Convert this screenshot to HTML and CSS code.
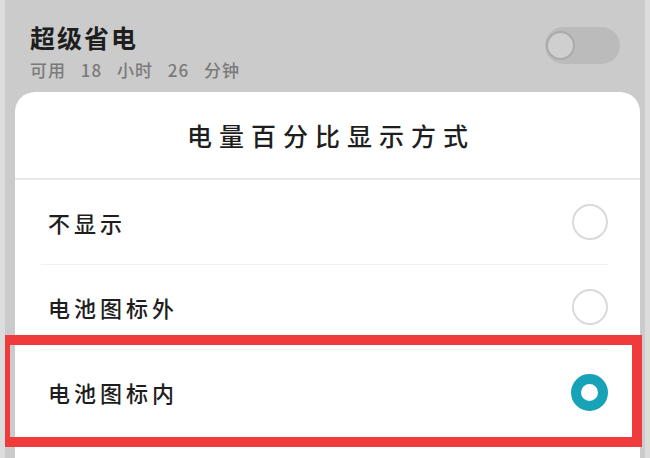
FILE: index.html
```html
<!DOCTYPE html>
<html lang="zh-CN">
<head>
  <meta charset="UTF-8">
  <title>电量百分比显示方式</title>
  <link rel="stylesheet" href="styles.css">
</head>
<body>
  <div class="screen">
    <!-- 超级省电 -->
    <div class="power">
      <div class="power-text">
        <div class="power-title">超级省电</div>
        <div class="power-sub">可用 18 小时 26 分钟</div>
      </div>
      <div class="toggle"><span class="knob"></span></div>
    </div>

    <!-- 弹出面板 -->
    <div class="sheet">
      <div class="sheet-title">电量百分比显示方式</div>
      <div class="option">
        <span class="option-label">不显示</span>
        <span class="radio"></span>
      </div>
      <div class="option">
        <span class="option-label">电池图标外</span>
        <span class="radio"></span>
      </div>
      <div class="option last">
        <span class="option-label">电池图标内</span>
        <span class="radio checked"></span>
      </div>
    </div>

    <div class="highlight"></div>
  </div>
</body>
</html>
```

FILE: styles.css
```css
body {
  margin: 0;
  background-color: #dcdcdc;
  font-family: "Noto Sans CJK SC", "Noto Sans", sans-serif;
  overflow: hidden;
}

.screen {
  position: relative;
  margin: 0 5px;
  height: 458px;
  padding: 0 5px 0 10px;
  background-color: #cbcbcb;
  overflow: hidden;
}

.power {
  display: flex;
  justify-content: space-between;
  height: 92px;
  padding: 22px 20px 0 15px;
  box-sizing: border-box;
}

.power-title {
  font-size: 25px;
  line-height: 30px;
  font-weight: bold;
  letter-spacing: 2px;
  color: #1e1e1e;
}

.power-sub {
  margin-top: 7px;
  font-size: 17px;
  line-height: 22px;
  font-weight: 500;
  letter-spacing: 1px;
  word-spacing: 10px;
  color: #7a7a7a;
}

.toggle {
  margin-top: 5px;
  width: 75px;
  height: 37px;
  border-radius: 19px;
  background-color: #bbbbbb;
  display: flex;
  align-items: center;
}

.knob {
  width: 25px;
  height: 25px;
  margin-left: 1px;
  border-radius: 50%;
  border: 2px solid #aaaaaa;
  background-color: #cfcfcf;
}

.sheet {
  background-color: white;
  border-radius: 20px 20px 0 0;
  height: 400px;
}

.sheet-title {
  height: 86px;
  display: flex;
  align-items: center;
  justify-content: center;
  font-size: 25px;
  font-weight: 500;
  letter-spacing: 7px;
  padding-left: 7px;
  color: #1e1e1e;
  border-bottom: 2px solid #e9e9e9;
}

.option {
  display: flex;
  justify-content: space-between;
  align-items: center;
  height: 84px;
  margin: 0 32px 0 26px;
  padding-left: 7px;
  border-bottom: 1px solid #f1f1f1;
}

.option.last {
  border-bottom: none;
}

.option-label {
  font-size: 22px;
  font-weight: 500;
  letter-spacing: 4px;
  color: #1e1e1e;
}

.radio {
  width: 32px;
  height: 32px;
  border: 2px solid #dadada;
  border-radius: 50%;
}

.radio.checked {
  width: 17px;
  height: 17px;
  border: 10px solid #17a2b8;
}

/* marco rojo */
.highlight {
  position: absolute;
  left: -5px;
  top: 335px;
  width: 622px;
  height: 92px;
  border: 10px solid #ef3b3b;
}
```
